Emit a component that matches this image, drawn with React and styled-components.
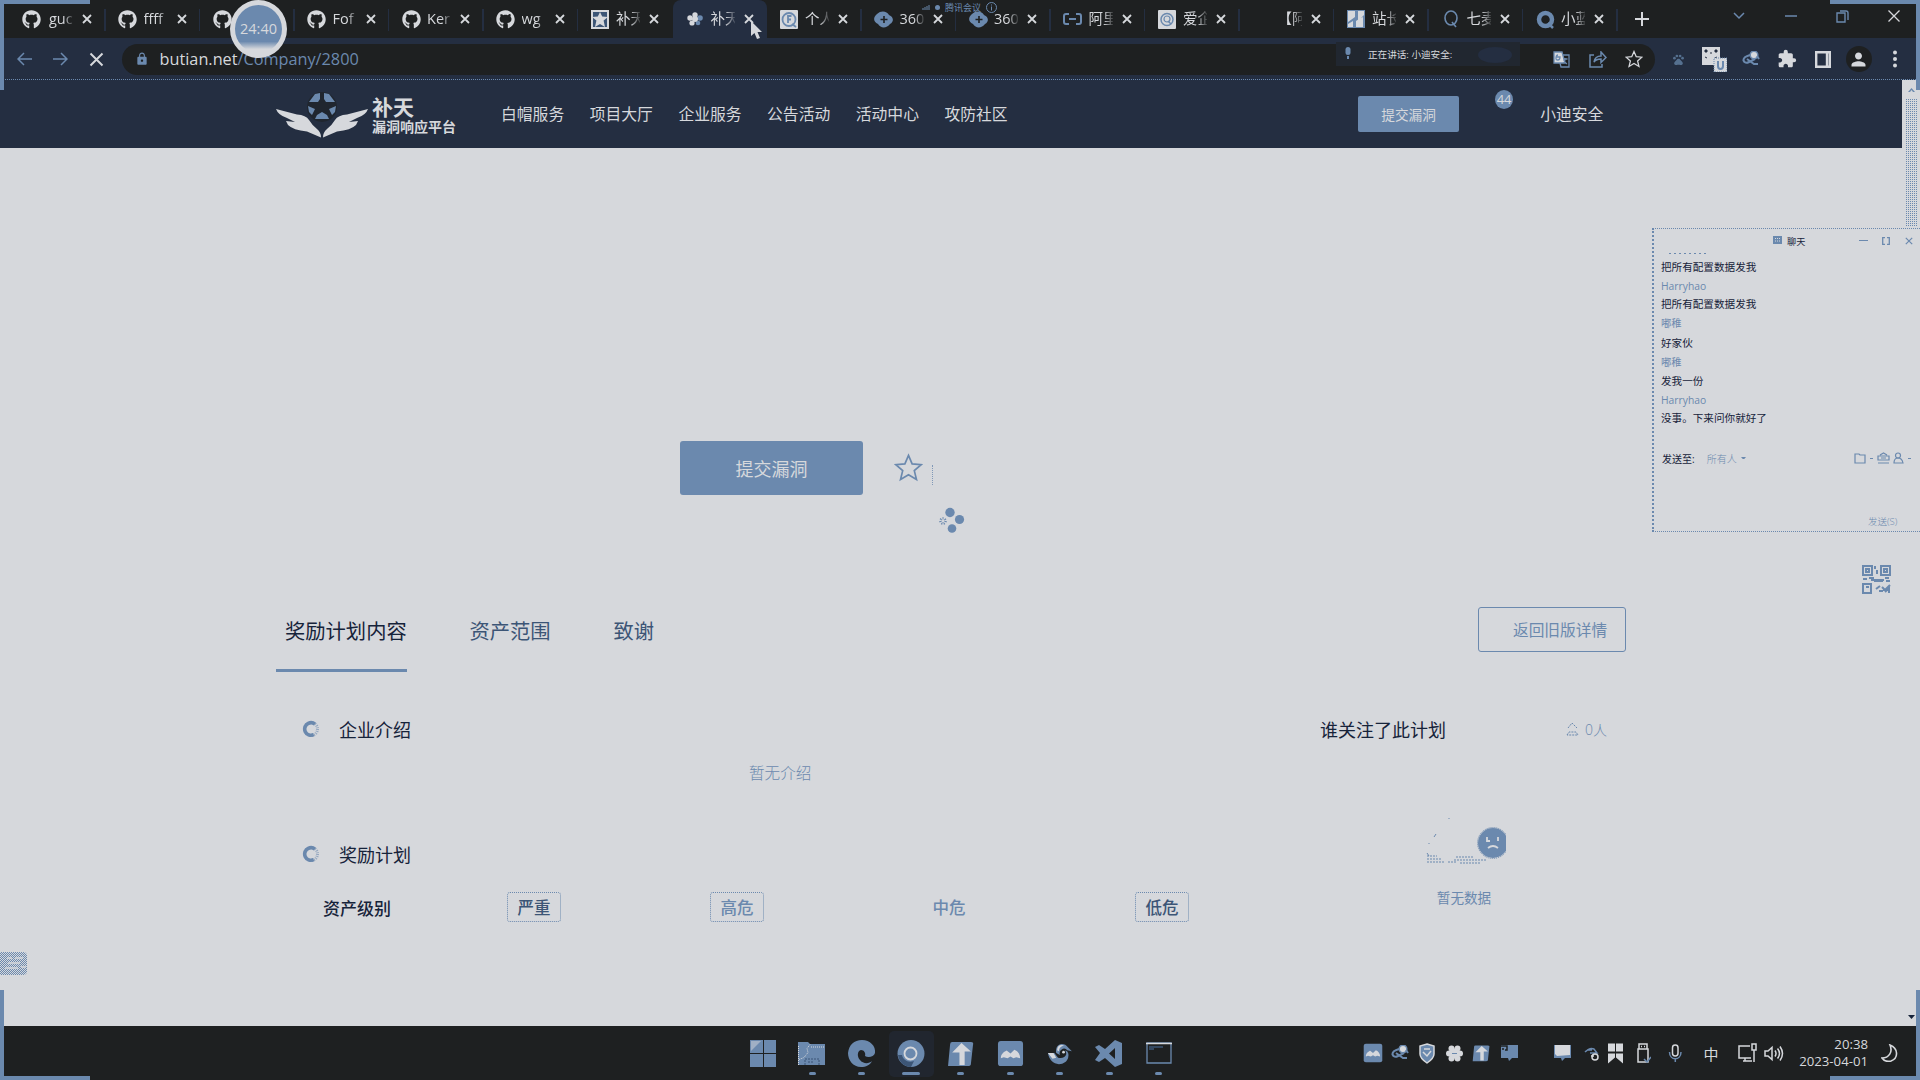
import React from "react";
import styled, { createGlobalStyle, css } from "styled-components";
import { FaGithub } from "react-icons/fa";
import { MdLock, MdExtension, MdPerson, MdTranslate, MdPets } from "react-icons/md";

const c = {
  ink: "#1e2021",
  navy: "#242e41",
  blue: "#6b89ae",
  light: "#d6d8dc",
  text: "#16233a",
  mid: "#3c5576",
};

const Global = createGlobalStyle`
  * { box-sizing: border-box; }
  html, body { margin: 0; padding: 0; background: ${c.ink}; overflow: hidden; }
  body { font-family: "Open Sans", "Noto Sans CJK SC", sans-serif; color: ${c.text}; }
  svg { display: block; flex: none; }
`;

const Screen = styled.div`
  position: relative;
  width: 1920px;
  height: 1080px;
  display: flex;
  flex-direction: column;
  overflow: hidden;
  background: ${c.ink};
  white-space: nowrap;
`;

/* ---------- browser tabs ---------- */
const TabStrip = styled.div`
  display: flex;
  height: 38px;
  padding-left: 11px;
  background: ${c.ink};
`;
const Favicon = styled.span`
  width: 18px;
  height: 19px;
  flex: none;
  display: flex;
  align-items: center;
  justify-content: center;
  margin-right: 7px;
  color: ${c.light};
`;
const BrowserTab = styled.div`
  width: 94.5px;
  height: 38px;
  flex: none;
  display: flex;
  align-items: center;
  padding-left: 13px;
  border-radius: 8px 8px 0 0;
  position: relative;
  background: ${(p) => (p.$active ? c.navy : "transparent")};
  &::after {
    content: "";
    position: absolute;
    right: 0;
    top: 9px;
    width: 1.5px;
    height: 22px;
    background: ${(p) => (p.$noLine ? "transparent" : c.navy)};
  }
  &:first-child {
    padding-left: 11px;
    ${Favicon} { margin-right: 9px; }
  }
`;
const TabTitle = styled.span`
  width: 24px;
  overflow: hidden;
  flex: none;
  font-size: 14.5px;
  line-height: 24px;
  color: ${c.light};
  mask-image: linear-gradient(90deg, #000 60%, rgba(0, 0, 0, 0.15));
`;
const TabClose = styled.span`
  margin-left: 9px;
  color: ${c.light};
`;
const NewTab = styled.span`
  width: 48px;
  display: flex;
  align-items: center;
  justify-content: center;
  color: ${c.light};
`;
const WindowButtons = styled.div`
  margin-left: auto;
  width: 207px;
  height: 32px;
  display: grid;
  grid-template-columns: repeat(4, 51.7px);
  place-items: center;
  color: ${c.blue};
`;

/* ---------- toolbar ---------- */
const Toolbar = styled.div`
  height: 42px;
  display: flex;
  align-items: center;
  padding: 5px 0 4px 6px;
  background: ${c.navy};
  border-bottom: 1px dotted ${c.blue};
`;
const NavButton = styled.span`
  width: 36.2px;
  display: flex;
  justify-content: center;
  color: ${(p) => (p.$on ? c.light : c.blue)};
`;
const AddressBar = styled.div`
  margin-left: 7px;
  width: 1533px;
  height: 31px;
  border-radius: 16px;
  background: ${c.ink};
  display: flex;
  align-items: center;
  padding: 0 3px 0 13px;
  color: ${c.blue};
`;
const Url = styled.span`
  margin-left: 11px;
  font-size: 16.25px;
  color: ${c.blue};
  b { font-weight: 400; color: ${c.light}; }
`;
const BarIcons = styled.span`
  margin-left: auto;
  display: grid;
  grid-template-columns: repeat(3, 36px);
  place-items: center;
`;
const StarSlot = styled.span`
  color: ${c.light};
`;
const Extensions = styled.span`
  display: grid;
  grid-template-columns: repeat(7, 36px);
  place-items: center;
  margin-left: 6px;
  color: ${c.light};
`;
const Avatar = styled.span`
  width: 26px;
  height: 26px;
  border-radius: 50%;
  background: ${c.ink};
  display: grid;
  place-items: center;
`;

/* ---------- page ---------- */
const Viewport = styled.div`
  display: flex;
  height: 946px;
`;
const Page = styled.div`
  width: 1902px;
  background: ${c.light};
`;
const Scrollbar = styled.div`
  width: 18px;
  background: ${c.light};
  display: flex;
  flex-direction: column;
  align-items: center;
  padding: 8px 0 7px;
`;
const Thumb = styled.div`
  width: 12px;
  height: 128px;
  margin: 7px 0 auto;
  background: conic-gradient(${c.blue} 25%, transparent 0) 0 0 / 2px 2px;
`;
const SiteHeader = styled.header`
  height: 68px;
  display: flex;
  align-items: center;
  padding: 1px 0 0 276px;
  background: ${c.navy};
`;
const Brand = styled.div`
  width: 90px;
  margin-left: 4px;
  color: ${c.light};
  font-weight: 700;
  padding-top: 3px;
`;
const BrandName = styled.div`
  font-size: 21px;
  line-height: 22px;
`;
const BrandSub = styled.div`
  font-size: 14px;
  line-height: 18px;
`;
const SiteNav = styled.nav`
  margin: -2px 0 0 39px;
  display: grid;
  grid-template-columns: repeat(6, 88.7px);
  color: ${c.light};
  font-size: 15.8px;
`;
const HeaderButton = styled.span`
  margin: -1px 0 0 325px;
  width: 101px;
  height: 36px;
  border-radius: 2px;
  display: grid;
  place-items: center;
  background: ${c.blue};
  color: ${c.light};
  font-size: 13.7px;
`;
const Badge = styled.span`
  margin: -31px 0 0 36px;
  width: 18px;
  height: 19px;
  border-radius: 50%;
  display: grid;
  place-items: center;
  background: ${c.blue};
  color: ${c.light};
  font-size: 13px;
`;
const UserName = styled.span`
  margin: -2px 0 0 27px;
  font-size: 15.8px;
  color: ${c.light};
`;
const Hero = styled.section`
  height: 442px;
  padding: 293px 0 0 680px;
  display: flex;
  align-items: flex-start;
  color: ${c.blue};
`;
const SubmitButton = styled.span`
  width: 183px;
  height: 54px;
  border-radius: 3px;
  margin-right: 31px;
  display: grid;
  place-items: center;
  background: ${c.blue};
  color: ${c.light};
  font-size: 18px;
`;
const Favorite = styled.span`
  margin-top: 12px;
`;
const Tick = styled.span`
  height: 20px;
  margin: 24px 0 0 9px;
  border-left: 1px dotted ${c.blue};
  opacity: 0.8;
`;
const Loader = styled.span`
  margin: 66px 0 0 6px;
`;
const Content = styled.main`
  width: 1350px;
  margin-left: 276px;
`;
const Tabs = styled.div`
  height: 82px;
  display: flex;
  align-items: center;
`;
const PageTab = styled.span`
  height: 82px;
  line-height: 82px;
  font-size: 20.3px;
  margin-right: 62.8px;
  color: ${(p) => (p.$active ? c.text : c.mid)};
  ${(p) =>
    p.$active &&
    css`
      padding-left: 9px;
      border-bottom: 3px solid ${c.blue};
    `}
`;
const OldVersion = styled.span`
  margin: -3px 0 0 auto;
  width: 148px;
  height: 45px;
  padding-left: 34px;
  line-height: 44px;
  border: 1px solid ${c.blue};
  border-radius: 3px;
  color: ${c.blue};
  font-size: 15.7px;
`;
const Columns = styled.div`
  display: flex;
  padding-top: 37px;
`;
const MainColumn = styled.div`
  width: 1044px;
`;
const SideColumn = styled.div`
  width: 306px;
`;
const Heading = styled.h3`
  margin: 0;
  height: 40px;
  display: flex;
  align-items: center;
  gap: 19px;
  padding-left: ${(p) => p.$indent || 0}px;
  font-size: 18px;
  font-weight: 400;
`;
const Count = styled.span`
  margin-left: 101px;
  display: flex;
  align-items: center;
  gap: 6px;
  font-size: 14px;
  font-weight: 300;
  color: ${c.blue};
`;
const Note = styled.p`
  margin: 4px 0 41px;
  height: 40px;
  line-height: 40px;
  padding-left: 473px;
  font-size: 15.6px;
  font-weight: 300;
  color: ${c.blue};
`;
const Levels = styled.div`
  margin-top: 18px;
  padding-left: 47px;
  height: 30px;
  display: grid;
  grid-template-columns: 184px 203px 212px 213px 60px;
  align-items: center;
`;
const LevelLabel = styled.span`
  font-size: 17px;
  font-weight: 500;
`;
const Level = styled.span`
  width: 54px;
  height: 30px;
  line-height: 29px;
  text-align: center;
  font-size: 16.5px;
  font-weight: 500;
  border: 1px dotted ${(p) => (p.$bare ? "transparent" : c.blue)};
  border-radius: 3px;
  color: ${(p) => (p.$strong ? c.mid : c.blue)};
`;
const Empty = styled.div`
  width: 288px;
  padding-top: 64px;
  display: flex;
  flex-direction: column;
  align-items: center;
  font-size: 13.6px;
  color: ${c.blue};
  gap: 22px;
`;

/* ---------- taskbar ---------- */
const Taskbar = styled.footer`
  height: 54px;
  background: ${c.ink};
  display: flex;
  padding-left: 738px;
`;
const AppSlot = styled.span`
  width: 49.5px;
  height: 54px;
  flex: none;
  padding-top: 5px;
  display: flex;
  flex-direction: column;
  align-items: center;
`;
const AppTile = styled.span`
  width: 45px;
  height: 46px;
  border-radius: 5px;
  display: flex;
  flex-direction: column;
  align-items: center;
  padding-top: 9px;
  background: ${(p) => (p.$active ? "#21262f" : "transparent")};
`;
const Indicator = styled.span`
  flex: none;
  margin-top: 5px;
  width: ${(p) => (p.$wide ? 18 : 7)}px;
  height: 3px;
  border-radius: 2px;
  background: ${(p) => (p.$hide ? "transparent" : c.blue)};
`;
const Tray = styled.div`
  flex: none;
  margin-left: 176.5px;
  display: flex;
  align-items: center;
`;
const TrayItem = styled.span`
  flex: none;
  width: ${(p) => p.$w}px;
  display: flex;
  justify-content: center;
  color: ${c.light};
  font-size: 15px;
`;
const Clock = styled.span`
  flex: none;
  width: 79px;
  text-align: right;
  font-size: 13.2px;
  line-height: 17.5px;
  color: ${c.light};
`;

/* ---------- floating layers ---------- */
const Timer = styled.div`
  position: absolute;
  left: 230px;
  top: 0;
  width: 57px;
  height: 58px;
  border-radius: 50%;
  border: 5px solid ${c.light};
  background: linear-gradient(${c.blue} 76%, ${c.light} 92%);
  color: ${c.light};
  font-size: 14.5px;
  line-height: 47px;
  text-align: center;
`;
const Meeting = styled.div`
  position: absolute;
  left: 922px;
  top: 0;
  height: 15px;
  display: flex;
  align-items: center;
  gap: 5px;
  font-size: 9px;
  color: ${c.blue};
`;
const Speaking = styled.div`
  position: absolute;
  left: 1336px;
  top: 42px;
  width: 184px;
  height: 24px;
  display: flex;
  align-items: center;
  padding: 0 0 1px 8px;
  gap: 16px;
  font-size: 9.6px;
  color: ${c.light};
  background: #212730;
`;
const Blob = styled.span`
  width: 34px;
  height: 16px;
  border-radius: 50%;
  margin: 3px 0 0 10px;
  background: ${c.navy};
`;
const Pointer = styled.div`
  position: absolute;
  left: 750px;
  top: 20px;
`;
const Corner = styled.div`
  position: absolute;
  width: 90px;
  height: 90px;
  border: 0 solid ${c.blue};
  ${(p) => (p.$v === "top" ? "top: 0; border-top-width: 4px;" : "bottom: 0; border-bottom-width: 4px;")}
  ${(p) => (p.$h === "left" ? "left: 0; border-left-width: 4px;" : "right: 0; border-right-width: 4px;")}
`;
const SideWidget = styled.div`
  position: absolute;
  left: 0;
  top: 952px;
  width: 27px;
  height: 23px;
  border-radius: 0 4px 4px 0;
  background: conic-gradient(${c.blue} 25%, transparent 0 50%, ${c.blue} 0 75%, transparent 0) 0 0 / 2px 2px;
`;
const Qr = styled.div`
  position: absolute;
  left: 1862px;
  top: 565px;
`;
const Chat = styled.aside`
  position: absolute;
  left: 1652px;
  top: 228px;
  width: 268px;
  height: 304px;
  background: ${c.light};
  border: 1px dotted ${c.blue};
  border-right: 0;
  border-left: 2px dotted ${c.blue};
  display: flex;
  flex-direction: column;
  color: ${c.blue};
`;
const ChatTitle = styled.div`
  height: 23px;
  display: flex;
  align-items: center;
  padding-left: 119px;
  font-size: 9.2px;
  gap: 5px;
`;
const ChatTitleText = styled.span`
  color: ${c.text};
  width: 52px;
`;
const ChatButtons = styled.span`
  display: grid;
  grid-template-columns: repeat(3, 22.5px);
  place-items: center;
  margin-left: 11px;
`;
const Log = styled.div`
  padding-left: 7px;
  height: 185px;
`;
const Line = styled.div`
  height: ${(p) => p.$h}px;
  line-height: ${(p) => p.$h}px;
  font-size: ${(p) => (p.$name ? 10.3 : 10.6)}px;
  color: ${(p) => (p.$name ? c.blue : c.text)};
`;
const Clipped = styled.div`
  width: 38px;
  height: 1px;
  margin: 1px 0 4px 15px;
  background: repeating-linear-gradient(90deg, ${c.blue} 0 2px, transparent 2px 5px);
`;
const SendTo = styled.div`
  height: 30px;
  padding-left: 8px;
  display: flex;
  align-items: center;
  font-size: 10px;
  color: ${c.text};
`;
const Everyone = styled.span`
  width: 147px;
  margin-left: 12px;
  font-weight: 300;
  color: ${c.blue};
  display: flex;
  align-items: center;
  gap: 4px;
`;
const Tools = styled.span`
  display: flex;
  align-items: center;
  gap: 3.5px;
  color: ${c.blue};
`;
const Dash = styled.span`
  width: 3px;
  height: 1px;
  background: ${c.blue};
`;
const SendLabel = styled.div`
  margin: auto 0 2px 214px;
  font-size: 9.5px;
  line-height: 14px;
  font-weight: 300;
`;

/* ---------- drawings ---------- */
const Cross = ({ s = 10, w = 1.8 }) => (
  <svg width={s} height={s} viewBox="0 0 10 10" stroke="currentColor" strokeWidth={w}>
    <path d="M1 1 9 9M9 1 1 9" />
  </svg>
);
const Stroke = ({ w = 18, h = 18, box = "0 0 18 18", sw = 1.5, children }) => (
  <svg width={w} height={h} viewBox={box} fill="none" stroke="currentColor" strokeWidth={sw}>
    {children}
  </svg>
);
const starPath = "M12 2l3 7 7.5.6-5.700 5 1.800 7.400L12 18l-6.600 4 1.800-7.400-5.700-5L9 9z";
const Star = ({ s, sw = 1.8 }) => (
  <Stroke w={s} h={s} box="0 0 24 24" sw={sw}>
    <path d={starPath} />
  </Stroke>
);
const Caret = ({ up, s = 7 }) => (
  <svg width={s} height={s * 0.57} viewBox="0 0 7 4" fill={up ? c.blue : "currentColor"}>
    <path d={up ? "M0 4 3.500 0 7 4H5L3.500 2 2 4z" : "M0 0h7L3.500 4z"} />
  </svg>
);
const Ring = () => (
  <svg width="18" height="18" viewBox="0 0 18 18" fill="none" stroke={c.blue}>
    <circle cx="9" cy="9" r="6.300" strokeWidth="3.600" strokeDasharray="26 14" transform="rotate(65 9 9)" />
    <circle cx="9" cy="9" r="6.500" strokeWidth="3" strokeOpacity=".6" strokeDasharray="1 1" />
  </svg>
);
const Shield = () => (
  <svg width="18" height="21" viewBox="0 0 18 21">
    <path d="M9 1 16 3v8c0 4-4 7-7 9-3-2-7-5-7-9V3z" fill={c.blue} stroke={c.light} strokeWidth="1.500" />
    <path d="M5 9l4 4 4-5M6 6h6" fill="none" stroke={c.light} strokeWidth="1.500" />
  </svg>
);
const Bird = ({ s = 26 }) => (
  <svg width={s} height={s * 0.86} viewBox="0 0 28 24">
    <path d="M1 11h7l4 5c4 1 8 0 9-4l-1-4c3 1 4 4 3 8-1 4-5 7-10 7C7 23 2 18 1 11z" fill={c.blue} />
    <path d="M10 11c-1-6 2-9 6-9 3 0 5 1 7 4l4 4-5-1c-1-2-4-3-6-1-2 1-3 4-2 6z" fill={c.blue} />
    <path d="M11 8c0-4 4-6 8-4-4 0-6 2-6 5M1 11h6l3 5-4 1z" fill={c.light} />
    <circle cx="18" cy="10" r="1.500" fill={c.light} />
  </svg>
);
const Satellite = () => (
  <svg width="18" height="16" viewBox="0 0 18 16" fill="none">
    <circle cx="12" cy="4" r="3.800" fill={c.light} stroke={c.blue} strokeWidth="1.500" />
    <path d="M8 4Q1 6 1.500 9.500 3 13 7 11L13 8M15 5l2 3M5 8l7 5h4" stroke={c.blue} strokeWidth="2" />
  </svg>
);
const TShape = ({ s = 26 }) => (
  <svg width={s} height={s} viewBox="0 0 26 26">
    <path d="M5 2h18q3 0 2 3l-2 18q0 2-3 2H1L3 4q0-2 2-2z" fill={c.blue} />
    <path d="M14 3l9 8h-6v13h-5V12H5z" fill={c.light} />
  </svg>
);
const Wave = ({ s = 28 }) => (
  <svg width={s} height={s} viewBox="0 0 28 28">
    <rect x="1" y="1" width="26" height="26" rx="3" fill={c.blue} />
    <path d="M4 19c0-5 4-7 6-8l4 3 4-4c3 1 6 4 6 9l-4-1-3 1-3-2-3 2-4-1z" fill={c.light} />
  </svg>
);
const Bubble = ({ fill, dot }) => (
  <svg width="19" height="18" viewBox="0 0 19 18">
    <path d="M1 1h17v13H12l-3 3-1-3H1z" fill={c.blue} />
    {fill ? <path d="M2 1h15v10l-13 1-2-2z" fill={c.light} /> : null}
    {dot ? <path d="M1 2h6v4H5M2 5h2" fill="none" stroke={c.ink} strokeWidth="1.500" /> : null}
  </svg>
);
const Logo = () => (
  <svg width="92" height="46" viewBox="0 0 92 46">
    <circle cx="46" cy="15" r="15" fill={c.ink} opacity=".55" />
    <g fill={c.blue}>
      <path d="M33 10 39 2l5-1v6l-2 3zM59 10 53 2l-5-1v6l2 3zM32 14l7 3-3 6-3-3zM60 14l-7 3 3 6 3-3zM39 27l2-4 5-3 5 3 2 4z" />
    </g>
    <g fill={c.light}>
      <path d="M0 17 21 22.500Q30 23 33 28T41 37Q45 40 45 45.500L31 39.500Q17 38 12 33L10 29l9 1-8-4Q2 23 0 17z" />
      <path d="M92 17 71 22.500Q62 23 59 28T51 37Q47 40 47 45.500L61 39.500Q75 38 80 33L82 29l-9 1 8-4Q90 23 92 17z" />
    </g>
  </svg>
);

const favicons = {
  gh: <FaGithub size={19} />,
  starbox: (
    <svg width="18" height="19" viewBox="0 0 18 19">
      <rect width="18" height="19" fill={c.light} />
      <path d="M2 2h14v15H2z" fill={c.mid} />
      <path d="M9 2l2.200 4.500 5.800.5-4.400 3.600L14 17l-5-3-5 3 1.400-6.400L1 7l5.800-.5z" fill={c.light} />
    </svg>
  ),
  flower: (
    <svg width="16" height="14" viewBox="0 0 16 14" fill={c.light}>
      <circle cx="8" cy="3" r="2.700" /><circle cx="3" cy="6" r="2.700" /><circle cx="5" cy="11" r="2.600" />
      <circle cx="11" cy="11" r="2.300" fill={c.blue} /><circle cx="13" cy="6" r="2.800" fill={c.blue} /><circle cx="8" cy="7" r="3" />
    </svg>
  ),
  f: (
    <svg width="18" height="19" viewBox="0 0 18 19" fill="none" stroke={c.blue}>
      <rect width="18" height="19" rx="1" fill={c.light} stroke="none" />
      <circle cx="9" cy="9.500" r="6.500" strokeWidth="1.800" />
      <path d="M11.500 6H8v7M8 9.500h3M12 14l4 3" strokeWidth="1.800" />
    </svg>
  ),
  cloud: (
    <svg width="19" height="17" viewBox="0 0 19 17">
      <path d="M3 3c4-4 10-3 12 1 5 2 5 7 1 9-3 4-9 5-12 0-5-2-5-7-1-10z" fill={c.blue} />
      <path d="M10 5v7M6.500 8.500h7" stroke={c.ink} strokeWidth="1.600" />
    </svg>
  ),
  bracket: (
    <Stroke w={19} h={14} box="0 0 19 14" sw={2}>
      <g stroke={c.blue}><path d="M6 2H3Q1 2 1 4v6q0 2 2 2h3M13 2h3q2 0 2 2v6q0 2-2 2h-3M6 7h7" /></g>
    </Stroke>
  ),
  face: (
    <svg width="18" height="19" viewBox="0 0 18 19" fill="none" stroke={c.blue}>
      <rect width="18" height="19" rx="1" fill={c.light} stroke="none" />
      <circle cx="9" cy="9.500" r="6" strokeWidth="1.500" /><circle cx="9" cy="9" r="3" strokeWidth="1.200" /><path d="M10 11l3 3" strokeWidth="1.500" />
    </svg>
  ),
  none: null,
  box: (
    <svg width="18" height="18" viewBox="0 0 18 18">
      <rect width="18" height="18" fill={c.blue} />
      <path d="M1 1h7v6L1 12zM11 1h6v4l-6 6zM9 17v-6l3-2 4-2v10zM1 14l5-3v6H1z" fill={c.light} />
    </svg>
  ),
  q: (
    <Stroke w={16} h={18} box="0 0 16 18" sw={1.6}>
      <g stroke={c.blue}><ellipse cx="8" cy="8" rx="6" ry="7" /><path d="M9 12l4 5" /></g>
    </Stroke>
  ),
  qb: (
    <Stroke w={19} h={19} box="0 0 19 19" sw={4.5}>
      <g stroke={c.blue}><circle cx="9.500" cy="9.500" r="6.500" /><path d="M12 13l5 5" strokeWidth="2.500" /></g>
    </Stroke>
  ),
};

const tabs = [
  ["gh", "guc"], ["gh", "ffff"], ["gh", ""], ["gh", "Fof"], ["gh", "Ker"], ["gh", "wg"],
  ["starbox", "补天"], ["flower", "补天"], ["f", "个人"], ["cloud", "360"], ["cloud", "360"],
  ["bracket", "阿里"], ["face", "爱企"], ["none", "【阿"], ["box", "站长"], ["q", "七麦"], ["qb", "小蓝"],
];

const apps = [
  <svg width="26" height="27" viewBox="0 0 26 27"><path d="M0 0h13v13H0zM14 0h12v13H14zM0 14h13v13H0zM14 14h12v13H14z" fill={c.blue} /><path d="M1 1h10L1 11z" fill={c.light} opacity=".5" /></svg>,
  <svg width="28" height="27" viewBox="0 0 28 27"><path d="M0 2h10l2 2h15v21H0z" fill={c.blue} /><path d="M.500 25V6M12 4.500l-3 4 1 4-4 5-5 2M13 7h13" stroke={c.light} strokeDasharray="1 1" fill="none" /><path d="M7 25v-6h14v6M10 22h6" stroke={c.mid} strokeDasharray="2 1" fill="none" /></svg>,
  <svg width="28" height="27" viewBox="0 0 28 27"><path d="M14 0c8 0 14 6 13 13-1 4-7 5-10 3 1-3-1-6-4-6-4 1-4 7-1 10 3 4 9 4 12 1-2 4-6 6-11 6C5 27 0 20 0 13 1 5 6 0 14 0z" fill={c.blue} /></svg>,
  <svg width="28" height="27" viewBox="0 0 28 27"><circle cx="14" cy="13.500" r="13.500" fill={c.blue} /><path d="M1 15c1 7 6 12 13 12l3-6c-6 2-11-1-12-6z" fill={c.mid} /><circle cx="13.500" cy="13.500" r="6" fill={c.blue} stroke={c.light} strokeWidth="1.800" /></svg>,
  <TShape s={27} />,
  <Wave s={27} />,
  <svg width="28" height="27" viewBox="0 0 28 27"><g transform="translate(1 3) scale(.92)"><path d="M1 11h7l4 5c4 1 8 0 9-4l-1-4c3 1 4 4 3 8-1 4-5 7-10 7C7 23 2 18 1 11z" fill={c.blue} /><path d="M10 11c-1-6 2-10 6-10 3 0 5 1 7 4l4 4-5-1c-1-2-4-3-6-1-2 1-3 4-2 6z" fill={c.blue} /><path d="M11 8c0-5 4-7 8-5-4 0-6 3-6 6M1 11h6l3 5-4 1z" fill={c.light} /><circle cx="18" cy="10" r="1.500" fill={c.light} /></g></svg>,
  <svg width="28" height="27" viewBox="0 0 28 27"><path d="M20 0l7 3v21l-7 3-10-9-6 4-4-2 5-7-5-6 4-2 6 4zM20 8l-6 5.500 6 5.500z" fill={c.blue} fillRule="evenodd" /></svg>,
  <svg width="26" height="27" viewBox="0 0 26 27"><path d="M1 3h24v20H1z" fill="none" stroke={c.blue} strokeWidth="1.300" /><path d="M0 3.500h26" stroke={c.light} strokeWidth="1.500" /><path d="M3 7h14M3 9h5" stroke={c.mid} strokeWidth="1.500" /></svg>,
];

const tray = [
  [26, <Wave s={20} />],
  [28, <Satellite />],
  [26, <Shield />],
  [28, <svg width="17" height="17" viewBox="0 0 17 17" fill={c.light}><circle cx="8.500" cy="8.500" r="5" /><circle cx="5.500" cy="3.500" r="3" /><circle cx="11.500" cy="3.500" r="3" /><circle cx="3" cy="8.500" r="3" /><circle cx="14" cy="8.500" r="3" /><circle cx="5.500" cy="13.500" r="3" /><circle cx="11.500" cy="13.500" r="3" /><path d="M6 8.500h5" stroke={c.blue} /></svg>],
  [26, <TShape s={18} />],
  [30, <Bubble dot />],
  [24, null],
  [28, <Bubble fill />],
  [32, <svg width="16" height="16" viewBox="0 0 16 16" fill="none" stroke={c.blue} strokeWidth="1.500"><path d="M1 7q5-5 9-3l3 4H6M3 5h5" /><circle cx="11" cy="12" r="3" stroke={c.light} /><path d="M7 11h3" stroke={c.light} /></svg>],
  [15, <svg width="15" height="21" viewBox="0 0 15 20" fill={c.light}><path d="M0 0h7v8H0zM8 0h7v8H8zM0 10h7v4l-7 6zM8 10h7v10l-7-6z" /></svg>],
  [40, <Stroke w={15} h={20} box="0 0 15 20"><path d="M3 1h8v5H3zM2 6h10v13H2zM5 3.500h1M8 3.500h1" /><path d="M8 16l3 3 4-5" stroke={c.blue} /></Stroke>],
  [24, <Stroke w={15} h={19} box="0 0 15 19"><rect x="4.500" y="1" width="5.500" height="11" rx="2.700" /><path d="M1.500 8c0 9 11.500 9 11.500 0M7.300 15v3" stroke={c.blue} /></Stroke>],
  [48, "中"],
  [24, <Stroke w={19} h={20} box="0 0 19 20"><path d="M12 3H1v12h12M5 18h9M7 15v3M14 1h4v6h-4zM16 7v12" /></Stroke>],
  [30, <Stroke w={20} h={17} box="0 0 20 16"><path d="M1 5.500h3L8 2v12l-4-3.500H1zM11 5q2 3 0 6M13.500 3q4 5 0 10M16 1q5 7 0 14" /></Stroke>],
];

const lines = [
  ["把所有配置数据发我", 19], ["Harryhao", 18, 1], ["把所有配置数据发我", 19], ["嘟稚", 19, 1], ["好家伙", 20],
  ["嘟稚", 19, 1], ["发我一份", 19], ["Harryhao", 19, 1], ["没事。下来问你就好了", 17],
];

export default function App() {
  return (
    <Screen>
      <Global />
      <TabStrip>
        {tabs.map(([icon, title], i) => (
          <BrowserTab key={i} $active={i === 7} $noLine={i === 7 || i === 6}>
            <Favicon>{favicons[icon]}</Favicon>
            <TabTitle>{title}</TabTitle>
            <TabClose><Cross /></TabClose>
          </BrowserTab>
        ))}
        <NewTab>
          <Stroke w={14} h={14} box="0 0 14 14" sw={2}><path d="M7 0v14M0 7h14" /></Stroke>
        </NewTab>
        <WindowButtons>
          <Stroke w={12} h={8} box="0 0 12 8"><path d="M1 1l5 5 5-5" /></Stroke>
          <Stroke w={12} h={4} box="0 0 12 4"><path d="M0 2h12" /></Stroke>
          <Stroke w={13} h={13} box="0 0 13 13" sw={1.4}><path d="M1 3h8v9H1zM4 1h6q2 0 2 2v7" /></Stroke>
          <svg width="12" height="12" viewBox="0 0 12 12" stroke={c.light} strokeWidth="1.300"><path d="M.500.500l11 11M11.500.500l-11 11" /></svg>
        </WindowButtons>
      </TabStrip>

      <Toolbar>
        <NavButton><Stroke w={15} h={14} box="0 0 15 14"><path d="M15 7H2M7 1L1 7l6 6" /></Stroke></NavButton>
        <NavButton><Stroke w={15} h={14} box="0 0 15 14"><path d="M0 7h13M8 1l6 6-6 6" /></Stroke></NavButton>
        <NavButton $on><Cross s={15} w={1.3} /></NavButton>
        <AddressBar>
          <MdLock size={14} />
          <Url><b>butian.net</b>/Company/2800</Url>
          <BarIcons>
            <svg width="17" height="17" viewBox="0 0 17 17" fill="none" stroke={c.blue} strokeWidth="1.300">
              <path d="M1 1h8l3 11H1z" fill={c.light} />
              <path d="M10 4h6v12H8l-1-4M3 6h4q0 3-2.200 3T3 6.500 5 4" />
              <path d="M10.500 8h4M12 7v1q0 3-1.500 4M11 9q1 3 3 4" />
            </svg>
            <Stroke w={18} h={17} box="0 0 18 17"><path d="M5 4H1v12h12v-3M5 11q1-6 7-6V1l5 5.500-5 5V8Q7 8 5 11z" /></Stroke>
            <StarSlot><Star s={18} sw={1.7} /></StarSlot>
          </BarIcons>
        </AddressBar>
        <Extensions>
          <MdPets size={13} color="#55708f" />
          <svg width="25" height="26" viewBox="0 0 25 26">
            <path d="M0 1h18v18H0z" fill={c.light} />
            <path d="M3 4h2v2H3zM13 4h2v2h-2zM8 7h2M3 11l2 1M15 11l-2 1" fill={c.navy} stroke={c.navy} />
            <rect x="12" y="12" width="13" height="14" fill={c.light} stroke={c.blue} strokeDasharray="1 1" />
            <path d="M16 15v5q0 3 2.500 3t2.500-3v-5" fill="none" stroke={c.blue} strokeWidth="2" />
          </svg>
          <Satellite />
          <MdExtension size={20} />
          <Stroke w={16} h={17} box="0 0 16 17" sw={2.4}><path d="M1.200 1.200h13.600v14.600H1.200zM12 1v15" /></Stroke>
          <Avatar><MdPerson size={21} /></Avatar>
          <svg width="4" height="18" viewBox="0 0 4 18" fill="currentColor"><circle cx="2" cy="2.500" r="2" /><circle cx="2" cy="9" r="2" /><circle cx="2" cy="15.500" r="2" /></svg>
        </Extensions>
      </Toolbar>

      <Viewport>
        <Page>
          <SiteHeader>
            <Logo />
            <Brand>
              <BrandName>补天</BrandName>
              <BrandSub>漏洞响应平台</BrandSub>
            </Brand>
            <SiteNav>
              {["白帽服务", "项目大厅", "企业服务", "公告活动", "活动中心", "攻防社区"].map((t) => (
                <span key={t}>{t}</span>
              ))}
            </SiteNav>
            <HeaderButton>提交漏洞</HeaderButton>
            <Badge>44</Badge>
            <UserName>小迪安全</UserName>
          </SiteHeader>

          <Hero>
            <SubmitButton>提交漏洞</SubmitButton>
            <Favorite><Star s={29} sw={1.4} /></Favorite>
            <Tick />
            <Loader>
              <svg width="26" height="27" viewBox="0 0 26 27" fill={c.blue}>
                <circle cx="11" cy="5.500" r="4.700" /><circle cx="20.500" cy="12.500" r="4.600" /><circle cx="13" cy="21.500" r="4.300" />
                <circle cx="4" cy="14" r="2.500" fill="none" stroke={c.blue} strokeWidth="2.500" strokeDasharray="1 1.200" />
              </svg>
            </Loader>
          </Hero>

          <Content>
            <Tabs>
              <PageTab $active>奖励计划内容</PageTab>
              <PageTab>资产范围</PageTab>
              <PageTab>致谢</PageTab>
              <OldVersion>返回旧版详情</OldVersion>
            </Tabs>
            <Columns>
              <MainColumn>
                <Heading $indent={26}><Ring />企业介绍</Heading>
                <Note>暂无介绍</Note>
                <Heading $indent={26}><Ring />奖励计划</Heading>
                <Levels>
                  <LevelLabel>资产级别</LevelLabel>
                  <Level $strong>严重</Level>
                  <Level>高危</Level>
                  <Level $bare>中危</Level>
                  <Level $strong>低危</Level>
                </Levels>
              </MainColumn>
              <SideColumn>
                <Heading>
                  谁关注了此计划
                  <Count>
                    <svg width="13" height="14" viewBox="0 0 13 14" fill="none" stroke={c.blue} strokeDasharray="2 1"><path d="M2 6l4-5 5 5M1 13l2-3h7l2 3z" /></svg>
                    0人
                  </Count>
                </Heading>
                <Empty>
                  <svg width="84" height="52" viewBox="0 0 84 52">
                    <path d="M27 5v1M14 21l-2 3M7 30v1M5 40l2 3" stroke={c.blue} />
                    <path d="M5 43h10M5 46h14M5 49h18M26 49h8M34 44h18M32 47h32M38 50h20" stroke={c.blue} strokeDasharray="2 1" />
                    <circle cx="71" cy="30" r="15.500" fill="none" stroke={c.blue} strokeDasharray="1 1" />
                    <circle cx="71" cy="30" r="15" fill={c.blue} />
                    <path d="M65 24v4h3M76 24v4M66 35q5-4 10 0" fill="none" stroke={c.light} strokeWidth="1.800" />
                  </svg>
                  <span>暂无数据</span>
                </Empty>
              </SideColumn>
            </Columns>
          </Content>
        </Page>
        <Scrollbar>
          <Caret up />
          <Thumb />
          <Caret />
        </Scrollbar>
      </Viewport>

      <Taskbar>
        {apps.map((a, i) => (
          <AppSlot key={i}>
            <AppTile $active={i === 3}>
              {a}
              <Indicator $wide={i === 3} $hide={i === 0} />
            </AppTile>
          </AppSlot>
        ))}
        <Tray>
          {tray.map(([w, node], i) => (
            <TrayItem key={i} $w={w}>{node}</TrayItem>
          ))}
          <Clock>20:38<br />2023-04-01</Clock>
          <TrayItem $w={43}>
            <Stroke w={17} h={18} box="0 0 17 18" sw={1.6}><path d="M9 1c8 3 9 13 1 16-4 1-7 0-9-3 7 0 11-6 8-13z" /></Stroke>
          </TrayItem>
        </Tray>
      </Taskbar>

      <Meeting>
        <Stroke w={8} h={7} box="0 0 8 7" sw={1}><path d="M1 6V4M3 6V3M5 6V2M7 6V1" /></Stroke>
        <svg width="5" height="7" viewBox="0 0 5 7" fill={c.blue}><circle cx="2.500" cy="3.500" r="2.500" /></svg>
        腾讯会议
        <Stroke w={11} h={11} box="0 0 11 11" sw={1}><circle cx="5.500" cy="5.500" r="5" /><path d="M5.500 2.500v1M5.500 4.500v4" /></Stroke>
      </Meeting>
      <Speaking>
        <svg width="8" height="13" viewBox="0 0 8 13" fill={c.blue}><rect x="1.500" width="5" height="8" rx="2.500" /><path d="M3 9h2v3H3z" /></svg>
        <span>正在讲话: 小迪安全:</span>
        <Blob />
      </Speaking>
      <Timer>24:40</Timer>
      <Pointer>
        <svg width="13" height="20" viewBox="0 0 13 20" fill={c.light}><path d="M1 1v15l3.500-3L7 19l3-1-2.500-6H12z" /></svg>
      </Pointer>

      <SideWidget>
        <svg width="27" height="23" viewBox="0 0 27 23" fill="none" stroke={c.light} strokeWidth="1.500"><path d="M7 6h5M15 6h8M8 11h12M5 16h13M21 15h5" /></svg>
      </SideWidget>
      <Chat>
        <ChatTitle>
          <svg width="9" height="9" viewBox="0 0 9 9" fill={c.blue}><path d="M0 0h9v8H0z" /><path d="M2 2.500h5M2 5h5" stroke={c.light} strokeDasharray="1 1" /></svg>
          <ChatTitleText>聊天</ChatTitleText>
          <ChatButtons>
            <Stroke w={9} h={3} box="0 0 9 3" sw={1}><path d="M0 1.500h9" /></Stroke>
            <Stroke w={8} h={8} box="0 0 8 8" sw={1.3}><path d="M3 .7H.7v6.600H3M5 .7h2.300v6.600H5" /></Stroke>
            <Cross s={8} w={1.5} />
          </ChatButtons>
        </ChatTitle>
        <Clipped />
        <Log>
          {lines.map(([t, h, name], i) => (
            <Line key={i} $h={h} $name={name}>{t}</Line>
          ))}
        </Log>
        <SendTo>
          发送至:
          <Everyone>所有人 <Caret s={5} /></Everyone>
          <Tools>
            <Stroke w={13} h={12} box="0 0 13 12" sw={1.2}><path d="M1 2h4l1 1h5v8H1z" /></Stroke>
            <Dash />
            <Stroke w={13} h={12} box="0 0 13 12" sw={1.2}><path d="M3 3l3.500-2L10 3M1 4h11v4H1zM4 6h5M1 11h11" /></Stroke>
            <Stroke w={11} h={12} box="0 0 11 12" sw={1.2}><circle cx="5" cy="3.500" r="2.500" /><path d="M1 11q0-5 4-5t5 5z" /></Stroke>
            <Dash />
          </Tools>
        </SendTo>
        <SendLabel>发送(S)</SendLabel>
      </Chat>
      <Qr>
        <svg width="29" height="29" viewBox="0 0 29 29" fill="none" stroke={c.blue} strokeWidth="2">
          <path d="M1 1h9v9H1zM19 1h9v9h-9zM1 19h8v9H1z" />
          <path d="M4 4h3v3H4zM22 4h3v3h-3zM4 22h3M13 1v3M15 5v4M1 14h4M7 13h5M9 15h13M12 16h9M23 13h4M24 16h4M14 24l4-3M17 26h4M20 22l3 3 5-5M23 27l4-4v5M21 25h6" />
        </svg>
      </Qr>
      <Corner $v="top" $h="left" />
      <Corner $v="top" $h="right" />
      <Corner $v="bottom" $h="left" />
      <Corner $v="bottom" $h="right" />
    </Screen>
  );
}
